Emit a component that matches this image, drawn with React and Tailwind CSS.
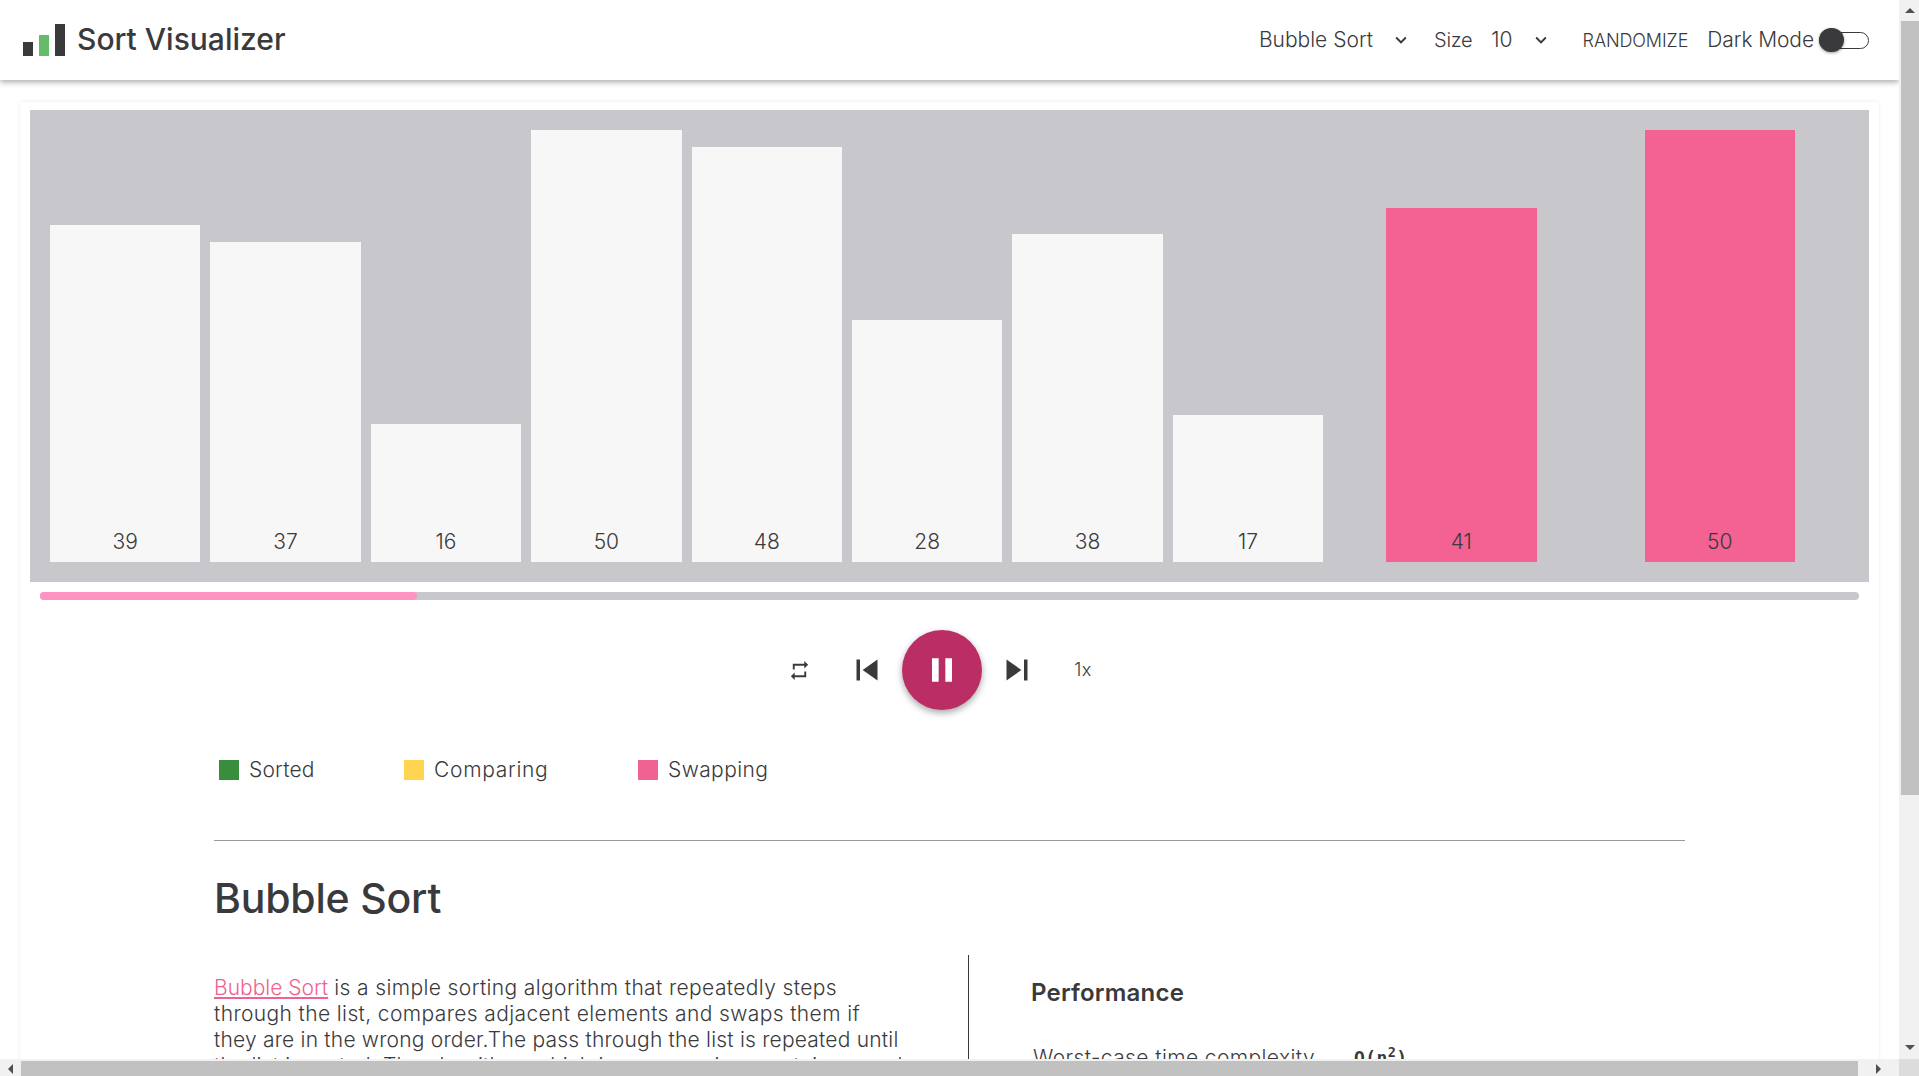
import { MdRepeat, MdSkipPrevious, MdSkipNext, MdPause, MdKeyboardArrowDown } from 'react-icons/md';

const bars = [
    { value: 39 },
    { value: 37 },
    { value: 16 },
    { value: 50 },
    { value: 48 },
    { value: 28 },
    { value: 38 },
    { value: 17 },
    { value: 41, swapping: true, offset: 53 },
    { value: 50, swapping: true, offset: 98 },
];

const legend = [
    { label: 'Sorted', color: 'bg-[#388e3c]', width: 'w-[65px] tracking-[0.2px]' },
    { label: 'Comparing', color: 'bg-[#ffd54f]', width: 'w-[114px] tracking-[0.7px]' },
    { label: 'Swapping', color: 'bg-[#f06292]', width: 'w-[99px] tracking-[0.4px]' },
];

function Logo() {
    return (
        <svg width="42" height="32" viewBox="0 0 42 32" className="shrink-0">
            <rect x="0" y="18" width="10" height="14" fill="#3a3a3c" />
            <rect x="16" y="11" width="10" height="21" fill="#66bb6a" />
            <rect x="32" y="0" width="10" height="32" fill="#3a3a3c" />
        </svg>
    );
}

function Arrow({ dir }) {
    const points = {
        up: '0,5 5,0 10,5',
        down: '0,0 10,0 5,5',
        left: '5,0 5,10 0,5',
        right: '0,0 5,5 0,10',
    };
    const vertical = dir === 'up' || dir === 'down';
    return (
        <svg width={vertical ? 10 : 5} height={vertical ? 5 : 10} viewBox={vertical ? '0 0 10 5' : '0 0 5 10'}>
            <polygon points={points[dir]} fill="#505050" />
        </svg>
    );
}

export default function App() {
    return (
        <div className="w-[1919px] h-screen flex flex-col overflow-hidden bg-white text-[#3a3a3c] font-['Inter','Liberation_Sans',sans-serif]">
            <div className="flex flex-1 min-h-0">
                <div className="flex-1 min-w-0 overflow-hidden">
                    <header className="relative z-10 h-20 flex items-center bg-white shadow-[0_2px_6px_rgba(0,0,0,0.35)] pl-[23px] pr-[30px]">
                        <Logo />
                        <h1 className="ml-[12px] text-[30px] font-medium -mt-px">Sort Visualizer</h1>
                        <div className="ml-auto flex items-center text-[21px] font-light">
                            <span className="tracking-[0px]">Bubble Sort</span>
                            <MdKeyboardArrowDown className="ml-[17px] text-[22px]" />
                            <span className="ml-[22px] text-[20px] tracking-[-0.3px]">Size</span>
                            <span className="ml-[19px]">10</span>
                            <MdKeyboardArrowDown className="ml-[17px] text-[22px]" />
                            <span className="ml-[31px] text-[18px] tracking-[-0.1px]">RANDOMIZE</span>
                            <span className="ml-[19px] tracking-[-0.1px]">Dark Mode</span>
                            <div className="relative ml-[5px] w-[50px] h-[17px] rounded-full border border-[#3a3a3c] bg-white">
                                <div className="absolute -left-px top-[-4.5px] w-[25px] h-6 rounded-full bg-[#3a3a3c] shadow-[0_1px_3px_rgba(0,0,0,0.4)]"></div>
                            </div>
                        </div>
                    </header>

                    <main className="mx-5 mt-[22px] pt-2 px-[10px] shadow-[0_0_4px_rgba(0,0,0,0.08)] h-[1200px]">
                        <div className="h-[472px] bg-[#c8c7cc] pl-5 pt-5 flex items-end gap-[10px] pb-5">
                            {bars.map((bar, i) => (
                                <div
                                    key={i}
                                    className={`relative w-[150.4px] shrink-0 flex items-end justify-center pb-[5px] text-[21px] font-light ${bar.swapping ? 'bg-[#f36292]' : 'bg-[#f7f7f7]'}`}
                                    style={{ height: bar.value * 8.64, marginLeft: bar.offset || 0 }}
                                >
                                    {bar.value}
                                </div>
                            ))}
                        </div>

                        <div className="mt-[10px] mx-[10px] h-2 rounded-full bg-[#c8c7cc]">
                            <div className="h-2 w-[377px] rounded-full bg-[#ff94c2]"></div>
                        </div>

                        <div className="mt-[30px] pl-[749px] flex items-center">
                            <button className="w-10 flex justify-center text-[23px]"><MdRepeat /></button>
                            <button className="ml-[27px] w-[42px] flex justify-center text-[42px]"><MdSkipPrevious /></button>
                            <button className="ml-[14px] w-20 h-20 rounded-full bg-[#bb2e65] text-white flex items-center justify-center text-[40px] shadow-[0_3px_7px_rgba(0,0,0,0.35)]"><MdPause /></button>
                            <button className="ml-[14px] w-[42px] flex justify-center text-[42px]"><MdSkipNext /></button>
                            <button className="ml-[25px] w-10 text-center text-[18px] tracking-[0.5px] font-light -mt-px">1x</button>
                        </div>

                        <div className="w-[1471px] mx-auto mt-[50px]">
                            <div className="flex items-center pl-[5px] h-5 gap-[90px] text-[21px] font-light">
                                {legend.map((item) => (
                                    <div key={item.label} className="flex items-center gap-[10px]">
                                        <span className={`w-5 h-5 ${item.color}`}></span>
                                        <span className={`${item.width} whitespace-nowrap`}>{item.label}</span>
                                    </div>
                                ))}
                            </div>

                            <hr className="mt-[60px] border-t border-[#999999]" />

                            <h2 className="mt-[33px] mb-[33px] text-[41px] leading-[48px] font-medium tracking-[-0.2px]">Bubble Sort</h2>

                            <div className="flex">
                                <div className="w-[755px] pt-5 pr-[20px] border-r border-[#3a3a3c] text-[21px] tracking-[0.2px] leading-[26px] font-light whitespace-nowrap h-[400px]">
                                    <a className="text-[#f06292] underline tracking-[0px]">Bubble Sort</a> <span className="tracking-[0.38px]">is a simple sorting algorithm that repeatedly steps</span><br />
                                    <span className="tracking-[0.38px]">through the list, compares adjacent elements and swaps them if</span><br />
                                    they are in the wrong order.The pass through the list is repeated until<br />
                                    the list is sorted. The algorithm, which is a comparison sort, is named
                                </div>
                                <div className="pl-[62px] pt-[23px]">
                                    <h3 className="text-[24px] leading-[30px] tracking-[0.2px] font-semibold">Performance</h3>
                                    <div className="mt-[37px] flex items-center text-[21px] tracking-[0.4px] leading-[26px] font-light whitespace-nowrap">
                                        <span className="ml-[2px] w-[321px]">Worst-case time complexity</span>
                                        <span className="font-['DejaVu_Sans_Mono',monospace] font-bold text-[18px]">O(n<sup>2</sup>)</span>
                                    </div>
                                </div>
                            </div>
                        </div>
                    </main>
                </div>

                <div className="w-5 pl-[2px] bg-[#f1f1f1] flex flex-col items-center">
                    <div className="h-[21px] flex items-center justify-center"><Arrow dir="up" /></div>
                    <div className="w-full h-[774px] bg-[#c1c1c1]"></div>
                    <div className="flex-1 flex items-end justify-center pb-[9px]"><Arrow dir="down" /></div>
                </div>
            </div>

            <div className="h-[17px] flex bg-[#f1f1f1]">
                <div className="flex-1 flex items-center pt-[2px]">
                    <div className="w-[21px] flex justify-center"><Arrow dir="left" /></div>
                    <div className="w-[1837px] h-[15px] bg-[#c1c1c1]"></div>
                    <div className="flex-1 flex justify-center"><Arrow dir="right" /></div>
                </div>
                <div className="w-5 bg-[#dcdcdc]"></div>
            </div>
        </div>
    );
}
